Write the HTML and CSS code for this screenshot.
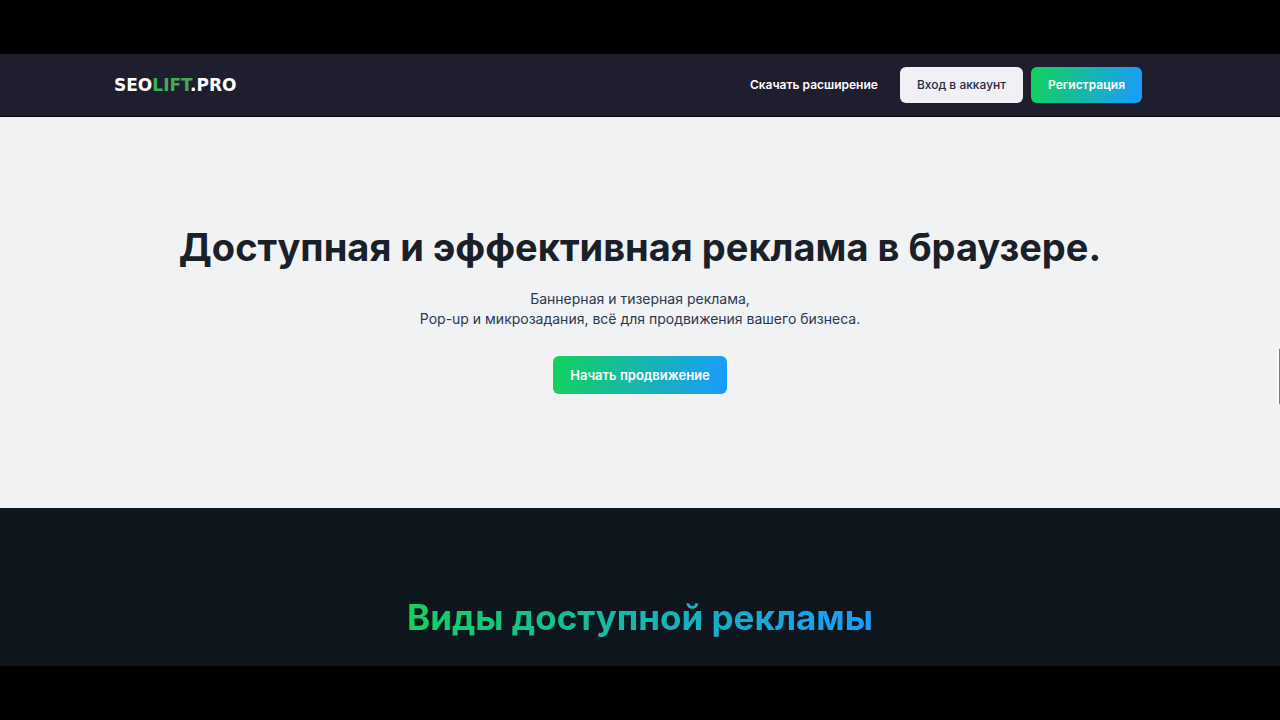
FILE: index.html
```html
<!DOCTYPE html>
<html lang="ru">
  <head>
    <meta charset="UTF-8" />
    <meta name="viewport" content="width=device-width, initial-scale=1.0" />
    <title>SEOLIFT.PRO</title>
    <link rel="stylesheet" href="styles.css">
  </head>
  <body>
    <header class="header">
      <a class="logo" href="#">SEO<span class="logo-accent">LIFT</span>.PRO</a>
      <nav class="nav">
        <a class="nav-link" href="#">Скачать расширение</a>
        <button class="btn btn-light" type="button">Вход в аккаунт</button>
        <button class="btn btn-gradient" type="button">Регистрация</button>
      </nav>
    </header>

    <main class="main">
      <section class="hero">
        <h1 class="hero-title">Доступная и эффективная реклама в браузере.</h1>
        <p class="hero-text">
          Баннерная и тизерная реклама,<br />
          Pop-up и микрозадания, всё для продвижения вашего бизнеса.
        </p>
        <button class="btn btn-gradient btn-large" type="button">Начать продвижение</button>
      </section>

      <section class="types">
        <h2 class="types-title">Виды доступной рекламы</h2>
      </section>
    </main>

    <div class="side-tab"></div>
  </body>
</html>
```

FILE: styles.css
```css
* {
  box-sizing: border-box;
}

body {
  margin: 0;
  min-height: 100vh;
  padding: 54px 0;
  display: flex;
  flex-direction: column;
  font-family: Inter, sans-serif;
  background: #000;
}

.header {
  display: flex;
  justify-content: space-between;
  align-items: center;
  padding: 13px 138px 13px 114px;
  background: #1f1e2e;
  border-bottom: 1px solid #08080f;
}

.logo {
  font-family: 'DejaVu Sans', sans-serif;
  font-size: 17px;
  font-weight: 700;
  line-height: 20px;
  color: #fff;
  text-decoration: none;
}

.logo-accent {
  color: #3fae55;
}

.nav {
  display: flex;
  align-items: center;
  gap: 8px;
}

.nav-link {
  margin-right: 14px;
  font-size: 12px;
  font-weight: 600;
  line-height: 16px;
  color: #fff;
  text-decoration: none;
}

.btn {
  padding: 10px 17px;
  border: 0;
  border-radius: 6px;
  font-family: inherit;
  font-size: 12px;
  line-height: 16px;
  cursor: pointer;
}

.btn-light {
  font-weight: 500;
  color: #212b43;
  background: #f1f0f5;
}

.btn-gradient {
  font-weight: 600;
  color: #fff;
  background: linear-gradient(100deg, #13d15b, #1b9bff);
}

.btn-large {
  padding: 11px 17px;
  font-size: 13px;
}

.main {
  flex: 1;
  display: flex;
  flex-direction: column;
}

.hero {
  display: flex;
  flex-direction: column;
  align-items: center;
  padding: 104px 20px 114px;
  text-align: center;
  background: #f1f2f4;
}

.hero-title {
  margin: 0;
  font-size: 38px;
  font-weight: 700;
  line-height: 52px;
  color: #1a2028;
}

.hero-text {
  margin: 16px 0 27px;
  font-size: 14px;
  line-height: 20px;
  color: #2b3850;
}

.types {
  flex: 1;
  display: flex;
  justify-content: center;
  align-items: flex-start;
  padding: 85px 20px 25px;
  background: #0d151d;
}

.types-title {
  margin: 0;
  font-size: 35px;
  font-weight: 700;
  line-height: 48px;
  color: transparent;
  background: linear-gradient(100deg, #13d15b, #1b9bff);
  background-clip: text;
}

.side-tab {
  position: absolute;
  right: 0;
  top: 348px;
  width: 3px;
  height: 57px;
  background: #777;
  border: 1px solid #e0e1e3;
  border-left: 2px solid #fff;
  border-right: 0;
}
```
